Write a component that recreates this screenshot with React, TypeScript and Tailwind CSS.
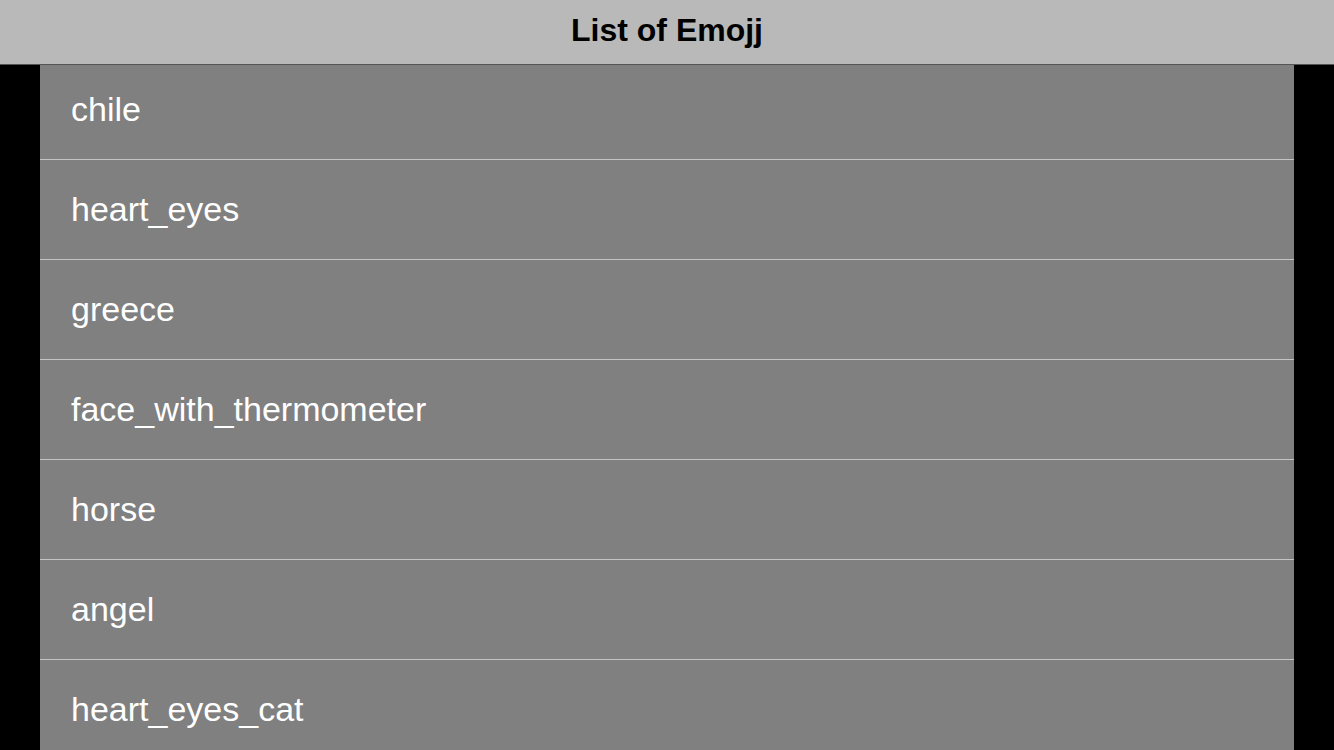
import React from "react";

const items = [
  "chile",
  "heart_eyes",
  "greece",
  "face_with_thermometer",
  "horse",
  "angel",
  "heart_eyes_cat",
];

export default function App() {
  return (
    <div
      className="h-screen w-full overflow-hidden bg-black flex flex-col"
      style={{ fontFamily: '"Liberation Sans", Arial, sans-serif' }}
    >
      <div className="relative z-10 h-[65px] shrink-0 bg-[#b9b9b9] border-b border-[#555555] flex items-center justify-center">
        <span className="text-[32px] font-bold text-black leading-none -mt-[4px]">List of Emojj</span>
      </div>
      <div className="-mt-[5px] mx-[40px] bg-[#808080] flex flex-col">
        {items.map((name) => (
          <div
            key={name}
            className="h-[100px] shrink-0 border-b border-[#c4c4c4] flex items-center pl-[31px]"
          >
            <span className="text-[34px] text-white leading-none -mt-[2px]">{name}</span>
          </div>
        ))}
      </div>
    </div>
  );
}
